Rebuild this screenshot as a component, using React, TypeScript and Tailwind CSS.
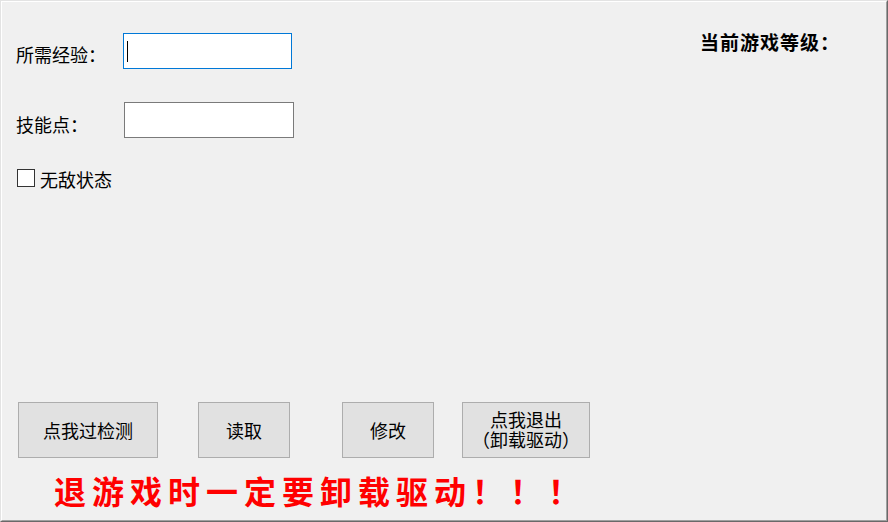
import React from "react";

const cjk = { fontFamily: '"Noto Sans CJK SC", "Noto Sans", sans-serif' };

export default function App() {
  return (
    <div
      className="w-[888px] h-[522px] border border-t-[#e3e3e3] border-l-[#e3e3e3] border-r-[#696969] border-b-[#696969] bg-[#f0f0f0]"
      style={cjk}
    >
      <div className="w-full h-full border border-t-white border-l-white border-r-[#a0a0a0] border-b-[#a0a0a0] flex flex-col text-black">
        {/* top area */}
        <div className="flex pt-[28px]">
          <div className="w-[698px] pl-[14px] pt-[3px] flex flex-col">
            <div className="flex items-start h-[36px]">
              <div className="w-[107px] text-[18px] leading-[24px] mt-[9px]">所需经验：</div>
              <div className="w-[169px] h-[36px] border border-[#0078d7] bg-white flex items-center pl-[3px]">
                <div className="w-[1px] h-[21px] bg-black" />
              </div>
            </div>
            <div className="flex items-start h-[36px] mt-[33px]">
              <div className="w-[108px] text-[18px] leading-[24px] mt-[10px]">技能点：</div>
              <div className="w-[170px] h-[36px] border border-[#7a7a7a] bg-white" />
            </div>
            <div className="flex items-center h-[22px] mt-[29px] ml-[1px]">
              <div className="w-[18px] h-[18px] border border-[#333333] bg-white" />
              <div className="ml-[5px] text-[18px] leading-[22px] mt-[1px]">无敌状态</div>
            </div>
          </div>
          <div className="text-[19px] leading-[24px] font-bold tracking-[1px]">当前游戏等级：</div>
        </div>

        <div className="flex-1" />

        {/* buttons */}
        <div className="flex pl-[16px]">
          <div className="w-[140px] h-[56px] bg-[#e1e1e1] border border-[#adadad] flex items-center justify-center text-[18px] leading-[20px]">
            点我过检测
          </div>
          <div className="ml-[40px] w-[92px] h-[56px] bg-[#e1e1e1] border border-[#adadad] flex items-center justify-center text-[18px] leading-[20px]">
            读取
          </div>
          <div className="ml-[52px] w-[92px] h-[56px] bg-[#e1e1e1] border border-[#adadad] flex items-center justify-center text-[18px] leading-[20px]">
            修改
          </div>
          <div className="ml-[28px] w-[128px] h-[56px] bg-[#e1e1e1] border border-[#adadad] flex flex-col items-center justify-center text-[18px] leading-[20px] pb-[2px]">
            <div className="leading-[20px]">点我退出</div>
            <div className="leading-[20px]">（卸载驱动）</div>
          </div>
        </div>

        <div className="mt-[14px] mb-[12px] pl-[52px] text-[32px] leading-[36px] tracking-[6px] font-bold text-[#ff0000]">
          退游戏时一定要卸载驱动！！！
        </div>
      </div>
    </div>
  );
}
